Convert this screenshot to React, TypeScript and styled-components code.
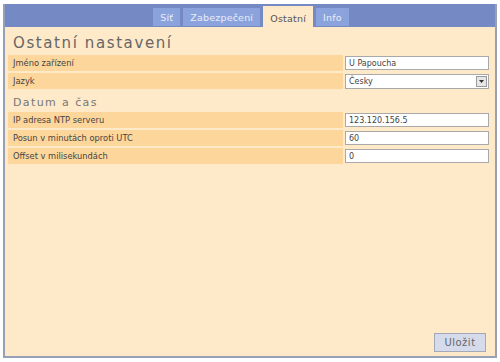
import styled, { createGlobalStyle } from "styled-components";

const GlobalStyle = createGlobalStyle`
  body {
    margin: 0;
    background: #ffffff;
    font-family: "DejaVu Sans", Verdana, sans-serif;
  }
`;

const Frame = styled.div`
  width: 494px;
  height: 354px;
  margin: 4px 0 0 3px;
  display: flex;
  flex-direction: column;
  box-sizing: border-box;
  border: 2px solid #98a0b6;
  border-top: none;
`;

const TabBar = styled.div`
  height: 23px;
  background: #7589c4;
  display: flex;
  justify-content: center;
  align-items: flex-end;
  gap: 3px;
  padding-left: 2px;
`;

const Tab = styled.div<{ $active?: boolean }>`
  height: ${(p) => (p.$active ? "20px" : "18px")};
  margin-bottom: ${(p) => (p.$active ? "-1px" : "1px")};
  padding: 0 ${(p) => (p.$active ? "7px" : "7px")};
  display: flex;
  align-items: center;
  font-size: 9.5px;
  letter-spacing: 0.2px;
  background: ${(p) => (p.$active ? "#fee9c9" : "#8ba3dc")};
  color: ${(p) => (p.$active ? "#555555" : "#e8edf8")};
  padding-top: ${(p) => (p.$active ? "2px" : "0")};
`;

const Panel = styled.div`
  flex: 1;
  background: #fee9c9;
  padding: 6px 4px 4px 3px;
  display: flex;
  flex-direction: column;
`;

const Title = styled.h1`
  margin: 0 0 2px 5px;
  font-size: 15px;
  font-weight: normal;
  letter-spacing: 1.6px;
  color: #666666;
  line-height: 20px;
`;

const Section = styled.h2`
  margin: 5px 0 2px 5px;
  font-size: 11px;
  font-weight: normal;
  letter-spacing: 1.4px;
  color: #777777;
  line-height: 14px;
`;

const Row = styled.div`
  display: flex;
  height: 16px;
  margin-bottom: 2px;
  align-items: stretch;
`;

const Label = styled.div`
  flex: 1;
  background: #fdd69b;
  font-size: 8.3px;
  color: #444444;
  padding-left: 5px;
  display: flex;
  align-items: center;
`;

const Field = styled.div`
  width: 146px;
  padding-left: 2px;
  display: flex;
  align-items: center;
`;

const Input = styled.input`
  box-sizing: border-box;
  width: 144px;
  height: 14px;
  border: 1px solid #a9a9a9;
  background: #ffffff;
  font-family: "DejaVu Sans", Verdana, sans-serif;
  font-size: 8px;
  color: #444444;
  padding: 0 3px;
  outline: none;
`;

const SelectBox = styled.div`
  box-sizing: border-box;
  width: 144px;
  height: 15px;
  border: 1px solid #a9a9a9;
  background: #ffffff;
  display: flex;
  align-items: center;
  font-size: 8px;
  color: #444444;
  padding-left: 3px;
`;

const SelectText = styled.span`
  flex: 1;
`;

const Arrow = styled.span`
  width: 11px;
  height: 11px;
  margin-right: 1px;
  background: #e6e6e6;
  border: 1px solid #9a9a9a;
  box-sizing: border-box;
  display: flex;
  align-items: center;
  justify-content: center;
`;

const Spacer = styled.div`
  flex: 1;
`;

const Footer = styled.div`
  display: flex;
  justify-content: flex-end;
  padding-right: 5px;
`;

const SaveButton = styled.button`
  width: 52px;
  height: 19px;
  background: #d6dbeb;
  border: 1px solid #a4a9b8;
  font-family: "DejaVu Sans", Verdana, sans-serif;
  font-size: 10px;
  letter-spacing: 0.5px;
  color: #666666;
  padding: 0;
`;

const tabs = ["Síť", "Zabezpečení", "Ostatní", "Info"];

const FieldRow: React.FC<{ label: string; value: string }> = ({ label, value }) => (
  <Row>
    <Label>{label}</Label>
    <Field>
      <Input defaultValue={value} />
    </Field>
  </Row>
);

export default function App() {
  return (
    <>
      <GlobalStyle />
      <Frame>
        <TabBar>
          {tabs.map((t) => (
            <Tab key={t} $active={t === "Ostatní"}>
              {t}
            </Tab>
          ))}
        </TabBar>
        <Panel>
          <Title>Ostatní nastavení</Title>
          <FieldRow label="Jméno zařízení" value="U Papoucha" />
          <Row>
            <Label>Jazyk</Label>
            <Field>
              <SelectBox>
                <SelectText>Česky</SelectText>
                <Arrow>
                  <svg width="5" height="3" viewBox="0 0 5 3">
                    <path d="M0 0h5L2.5 3z" fill="#333" />
                  </svg>
                </Arrow>
              </SelectBox>
            </Field>
          </Row>
          <Section>Datum a čas</Section>
          <FieldRow label="IP adresa NTP serveru" value="123.120.156.5" />
          <FieldRow label="Posun v minutách oproti UTC" value="60" />
          <FieldRow label="Offset v milisekundách" value="0" />
          <Spacer />
          <Footer>
            <SaveButton>Uložit</SaveButton>
          </Footer>
        </Panel>
      </Frame>
    </>
  );
}
